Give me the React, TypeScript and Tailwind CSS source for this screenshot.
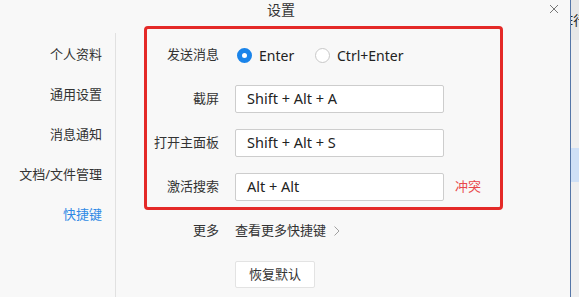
import { useState } from "react";

const cjk = { fontFamily: '"Noto Sans", "Noto Sans CJK SC", sans-serif' };

const navItems = ["个人资料", "通用设置", "消息通知", "文档/文件管理", "快捷键"];

const Radio = ({ checked }: { checked: boolean }) =>
  checked ? (
    <span className="w-[15px] h-[15px] rounded-full border-[5px] border-[#1a84ea] bg-white shrink-0" />
  ) : (
    <span className="w-[15px] h-[15px] rounded-full border border-[#c8c8c8] bg-white shrink-0" />
  );

const ShortcutRow = ({ label, value, conflict }: { label: string; value: string; conflict?: boolean }) => (
  <div className="flex items-center h-[28px]">
    <div className="w-[103px] text-right text-[13px] text-[#333]">{label}</div>
    <div className="ml-[16px] w-[209px] h-[28px] bg-white border border-[#cdcdcd] rounded-[2px] px-[11px] flex items-center text-[14.5px] text-[#222]">
      {value}
    </div>
    {conflict && <span className="ml-[11px] text-[13px] text-[#e8474b]">冲突</span>}
  </div>
);

const App = () => {
  const [sendKey, setSendKey] = useState("enter");
  const active = "快捷键";

  return (
    <div className="w-[579px] h-[297px] flex overflow-hidden bg-[#f8f8f8]" style={cjk}>
      {/* settings dialog */}
      <div className="relative w-[570px] h-full flex flex-col bg-[#f8f8f8]">
        <div className="relative h-[33px] shrink-0">
          <div className="text-center text-[14px] leading-[20px] text-[#333] pr-[8px]">设置</div>
          <button className="absolute right-[12px] top-[5px] w-[8px] h-[8px]">
            <svg viewBox="0 0 8 8" className="w-[8px] h-[8px]" stroke="#777" strokeWidth="1">
              <line x1="0" y1="0" x2="8" y2="8" />
              <line x1="8" y1="0" x2="0" y2="8" />
            </svg>
          </button>
        </div>

        <div className="flex flex-1">
          <nav className="w-[116px] border-r border-[#e1e1e1] pt-[2px] pr-[13px] flex flex-col items-end">
            {navItems.map((item) => (
              <div
                key={item}
                className={`h-[40px] flex items-center text-[13px] ${item === active ? "text-[#2f8ae5]" : "text-[#333]"}`}
              >
                {item}
              </div>
            ))}
          </nav>

          <section className="flex-1 pt-[8px] flex flex-col gap-4">
            <div className="flex items-center h-[28px]">
              <div className="w-[103px] text-right text-[13px] text-[#333]">发送消息</div>
              <label className="ml-[18px] w-[78px] flex items-center gap-[7px] cursor-pointer" onClick={() => setSendKey("enter")}>
                <Radio checked={sendKey === "enter"} />
                <span className="text-[14px] text-[#222]">Enter</span>
              </label>
              <label className="flex items-center gap-[7px] cursor-pointer" onClick={() => setSendKey("ctrl")}>
                <Radio checked={sendKey === "ctrl"} />
                <span className="text-[14px] text-[#222]">Ctrl+Enter</span>
              </label>
            </div>

            <ShortcutRow label="截屏" value="Shift + Alt + A" />
            <ShortcutRow label="打开主面板" value="Shift + Alt + S" />
            <ShortcutRow label="激活搜索" value="Alt + Alt" conflict />

            <div className="flex items-center h-[28px]">
              <div className="w-[103px] text-right text-[13px] text-[#333]">更多</div>
              <div className="ml-[16px] flex items-center gap-[8px] text-[13px] text-[#333]">
                查看更多快捷键
                <svg viewBox="0 0 6 10" className="w-[6px] h-[10px]" fill="none" stroke="#a0a0a0" strokeWidth="1">
                  <polyline points="0.5,0.5 5,5 0.5,9.5" />
                </svg>
              </div>
            </div>

            <div className="flex">
              <button className="ml-[119px] w-[80px] h-[27px] bg-white border border-[#e3e3e3] rounded-[2px] text-[13px] text-[#333]">
                恢复默认
              </button>
            </div>
          </section>
        </div>

        {/* red annotation frame */}
        <div className="absolute left-[144px] top-[26px] w-[359px] h-[184px] border-[3px] border-[#e42a28] rounded-[4px] pointer-events-none" />
      </div>

      {/* window behind */}
      <div className="w-[9px] h-full border-l border-[#5576a8] flex flex-col bg-[#efefef]">
        <div className="h-[40px] bg-[#e7e7e7] overflow-hidden text-[13px] text-[#222] leading-[40px] whitespace-nowrap">
          <span className="-ml-[5px] inline-block">E行</span>
        </div>
        <div className="h-[108px]" />
        <div className="h-[34px] bg-[#cfe0f6]" />
        <div className="flex-1" />
      </div>
    </div>
  );
};

export default App;
